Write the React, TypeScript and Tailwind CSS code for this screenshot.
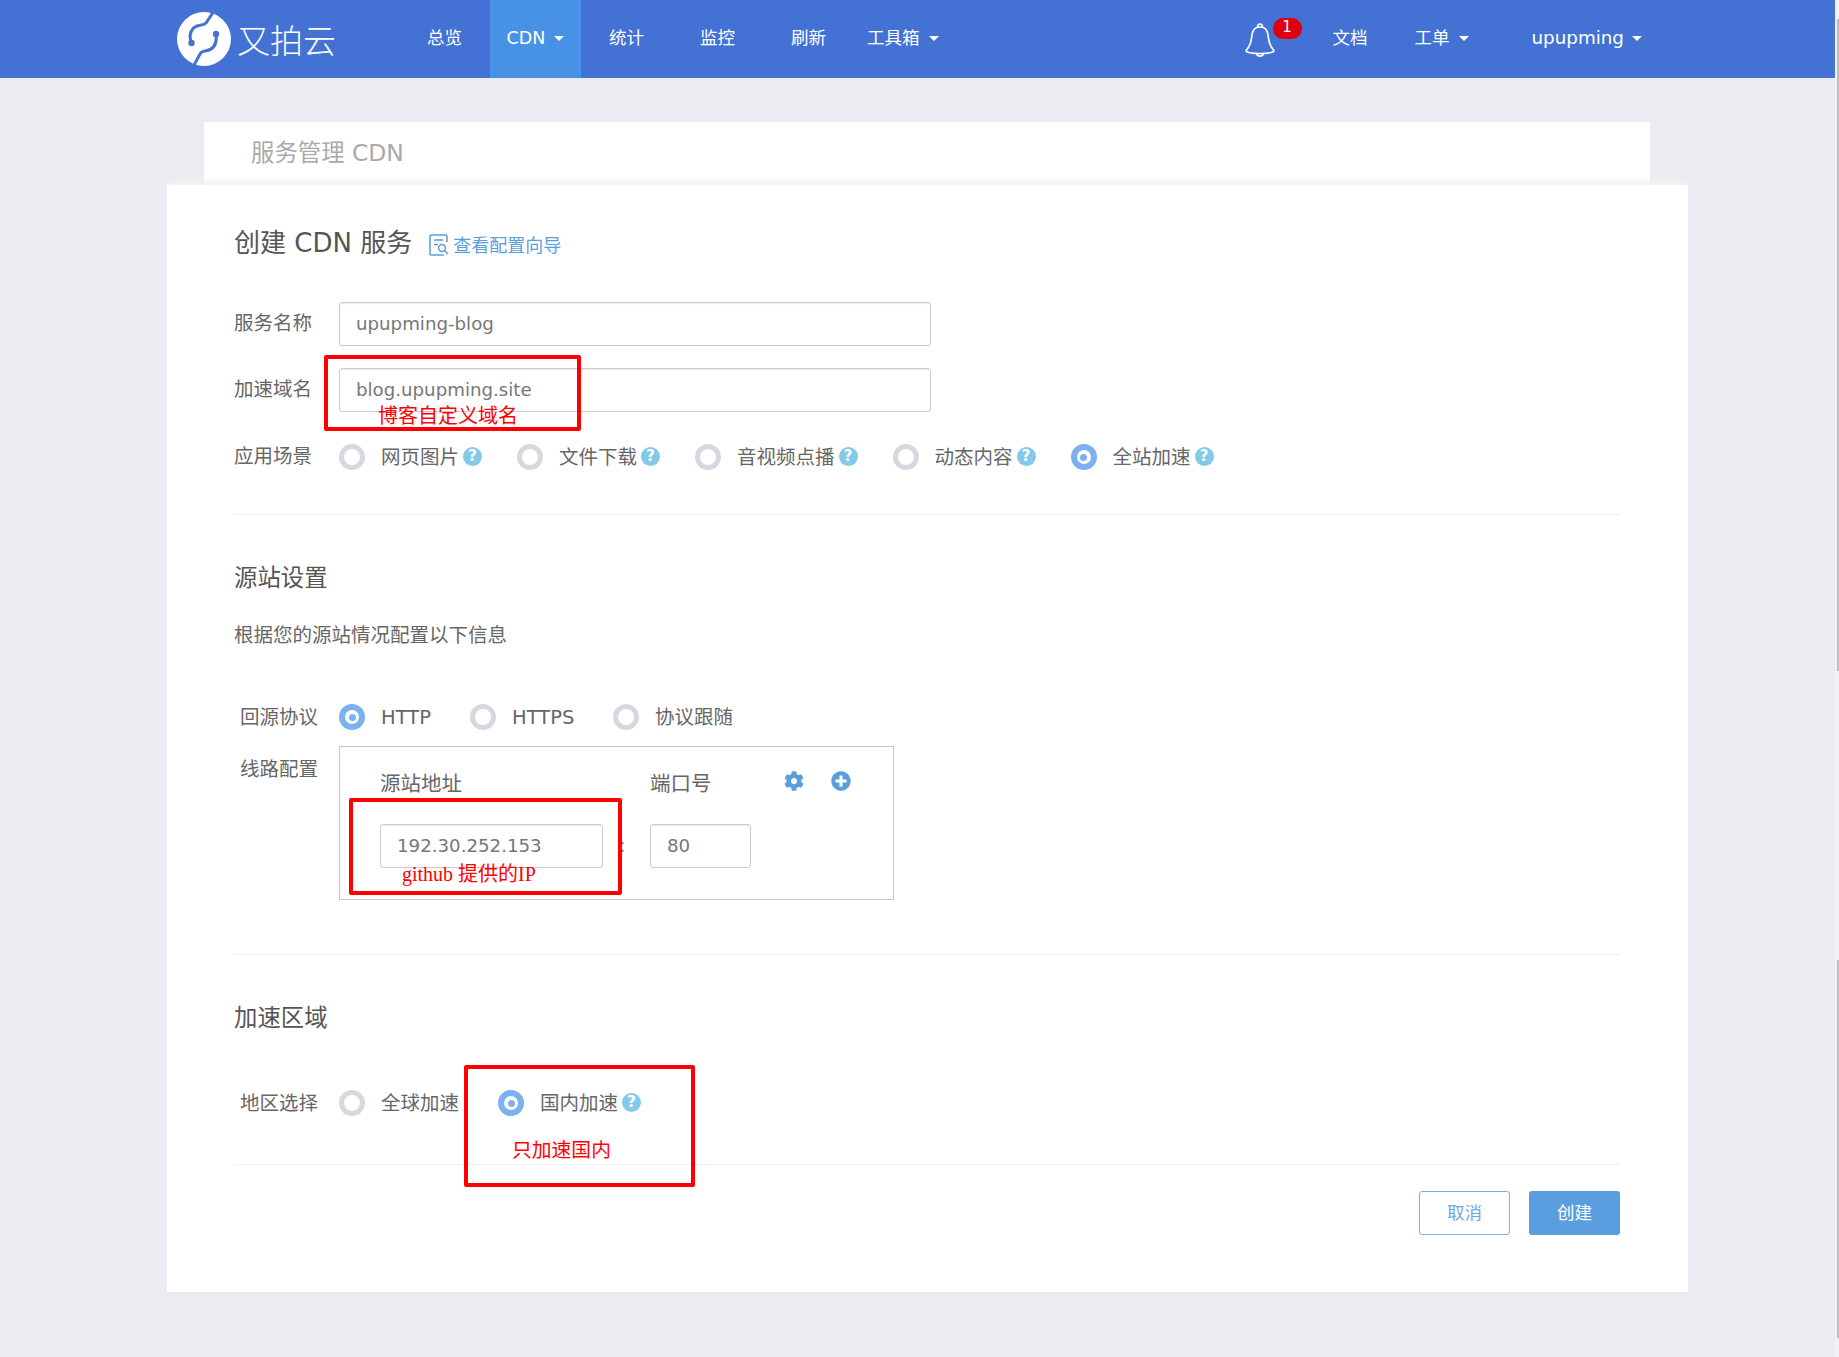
import { FaCog, FaPlusCircle } from "react-icons/fa";

const sans = "font-['DejaVu_Sans','Noto_Sans_CJK_SC',sans-serif]";

function Caret({ className = "" }: { className?: string }) {
  return <span className={`inline-block w-0 h-0 border-x-[5.5px] border-t-[5.5px] border-x-transparent border-t-white mt-[2px] ${className}`} />;
}

function Logo() {
  return (
    <svg width="54" height="54" viewBox="0 0 54 54" className="shrink-0">
      <circle cx="27" cy="27" r="27" fill="#fff" />
      <path d="M37 -1 L29 11 Q27 13 24 13 Q14 14 13 24 L14 31" fill="none" stroke="#4372d4" strokeWidth="3" />
      <path d="M39 22 Q41 37 28 39 Q25 39 23 42 L16 55" fill="none" stroke="#4372d4" strokeWidth="3" />
      <circle cx="14.5" cy="31" r="3.2" fill="#4372d4" />
      <circle cx="39" cy="22" r="3.2" fill="#4372d4" />
    </svg>
  );
}

function Bell() {
  return (
    <svg width="30" height="35" viewBox="0 0 30 35" fill="none" stroke="#fff" strokeWidth="1.7">
      <path d="M15 5 C8 5 7 11 6.5 16 C6 22 4 25 1.5 28 C0.5 29.5 2 30 4 30.5 C11 32 19 32 26 30.5 C28 30 29.5 29.5 28.5 28 C26 25 24 22 23.5 16 C23 11 22 5 15 5 Z" />
      <path d="M12.5 5 C12.5 1 17.5 1 17.5 5" />
      <path d="M11.5 31.5 C12 35 18 35 18.5 31.5" />
    </svg>
  );
}

function GuideIcon() {
  return (
    <svg width="20" height="22" viewBox="0 0 20 22" fill="none" stroke="#5b9ee0" strokeWidth="1.5">
      <path d="M18 8 V2 Q18 1 17 1 H2 Q1 1 1 2 V20 Q1 21 2 21 H15" />
      <path d="M5 6 H14 M5 10.5 H9" />
      <circle cx="13" cy="14" r="3.4" />
      <path d="M15.5 16.5 L19 20" />
    </svg>
  );
}

function Radio({ checked = false }: { checked?: boolean }) {
  return checked ? (
    <span className="w-[26px] h-[26px] shrink-0 rounded-full border-[6px] border-[#7cb1ef] bg-white flex items-center justify-center">
      <span className="w-[7px] h-[7px] rounded-full bg-[#7cb1ef]" />
    </span>
  ) : (
    <span className="w-[26px] h-[26px] shrink-0 rounded-full border-[5px] border-[#d5d8de] bg-white" />
  );
}

function Help() {
  return (
    <span className="ml-1 -mt-[1px] w-[19px] h-[19px] shrink-0 rounded-full bg-[#85c9ea] flex items-center justify-center text-white text-[15.5px] leading-none font-bold">?</span>
  );
}

function Option({ label, checked, help, className = "" }: { label: string; checked?: boolean; help?: boolean; className?: string }) {
  return (
    <div className={`flex items-center ${className}`}>
      <Radio checked={checked} />
      <span className="ml-4 pt-[2px] whitespace-nowrap">{label}</span>
      {help && <Help />}
    </div>
  );
}

function TextInput({ value, className }: { value: string; className: string }) {
  return (
    <input
      readOnly
      value={value}
      className={`h-[44px] rounded-[3px] border border-[#ccc] px-4 pb-[2px] text-[18.2px] text-[#777] bg-white outline-none shadow-[inset_0_1px_1px_rgba(0,0,0,0.08)] ${className}`}
    />
  );
}

const navItems = ["总览", "CDN", "统计", "监控", "刷新"];

export default function App() {
  return (
    <div className={`flex h-screen overflow-hidden bg-[#f1f1f1] ${sans}`}>
      <div className="flex-1 min-w-0 bg-[#ebebf1]">
        {/* Header */}
        <header className="h-[78px] bg-[#4372d4] flex items-stretch text-white text-[17.5px] leading-[26px]">
          <div className="ml-[177px] w-[222px] flex items-center">
            <Logo />
            <span className="ml-[6px] text-[33px] font-light leading-none mt-1">又拍云</span>
          </div>
          {navItems.map((item) => (
            <div
              key={item}
              className={`w-[91px] pb-[3px] flex items-center justify-center ${item === "CDN" ? "bg-[#4892e6]" : ""}`}
            >
              {item}
              {item === "CDN" && <Caret className="ml-[9px]" />}
            </div>
          ))}
          <div className="ml-[13px] pb-[3px] flex items-center">
            工具箱
            <Caret className="ml-[9px]" />
          </div>
          <div className="ml-[306px] relative w-[88px] flex items-center">
            <Bell />
            <span className="absolute left-[28px] top-[18px] w-[29px] h-[21px] rounded-[10px] bg-[#e0000f] text-[15px] leading-[19px] text-center">1</span>
          </div>
          <div className="pb-[3px] flex items-center">文档</div>
          <div className="ml-[47px] pb-[3px] flex items-center">
            工单
            <Caret className="ml-[9px]" />
          </div>
          <div className="ml-[63px] pb-[3px] flex items-center text-[18.3px]">
            upupming
            <Caret className="ml-[8px]" />
          </div>
        </header>

        <main className="ml-[167px] w-[1521px] pt-[44px]">
          {/* Breadcrumb */}
          <div className="ml-[37px] mr-[38px] h-[63px] bg-white pl-[47px] pt-[15px] text-[23.4px] leading-[32px] text-[#aaa]">服务管理 CDN</div>

          {/* Card */}
          <div className="relative bg-white pl-[67px] pr-[68px] pt-[37px] pb-[57px] text-[19.5px] text-[#666] shadow-[0_-6px_6px_-1px_rgba(243,243,243,0.9)]">
            <div className="h-[40px] flex items-center">
              <h1 className="text-[26px] pt-[2px] text-[#555]">创建 CDN 服务</h1>
              <span className="ml-[17px] mt-[6px] flex items-center text-[18px] text-[#5b9ee0]">
                <GuideIcon />
                <span className="ml-[4px]">查看配置向导</span>
              </span>
            </div>

            <div className="mt-[40px] flex items-center">
              <span className="w-[105px]">服务名称</span>
              <TextInput value="upupming-blog" className="w-[592px]" />
            </div>
            <div className="mt-[22px] flex items-center">
              <span className="w-[105px]">加速域名</span>
              <TextInput value="blog.upupming.site" className="w-[592px]" />
            </div>
            <div className="mt-[32px] flex items-center h-[26px]">
              <span className="w-[105px]">应用场景</span>
              <div className="flex items-center gap-[35px]">
                <Option label="网页图片" help />
                <Option label="文件下载" help />
                <Option label="音视频点播" help />
                <Option label="动态内容" help />
                <Option label="全站加速" help checked />
              </div>
            </div>

            <div className="mt-[44px] h-px bg-[#eee]" />

            <h2 className="mt-[48px] h-[30px] leading-[30px] text-[23.4px] text-[#555]">源站设置</h2>
            <p className="mt-[29px] h-[28px] leading-[28px]">根据您的源站情况配置以下信息</p>

            <div className="mt-[54px] flex items-center h-[26px]">
              <span className="w-[105px] pl-[6px] pt-[2px]">回源协议</span>
              <Option label="HTTP" checked className="w-[131px]" />
              <Option label="HTTPS" className="w-[143px]" />
              <Option label="协议跟随" />
            </div>

            <div className="mt-[16px] flex items-start">
              <span className="w-[105px] pl-[6px] mt-[10px] leading-[28px]">线路配置</span>
              <div className="w-[555px] h-[154px] border border-[#c8c8c8] pl-[40px] pt-[23px]">
                <div className="flex items-center h-[28px] text-[20.5px]">
                  <span className="w-[270px]">源站地址</span>
                  <span className="w-[134px]">端口号</span>
                  <FaCog className="text-[#5b9ee0] text-[20px] -mt-[6px]" />
                  <FaPlusCircle className="ml-[27px] text-[#5b9ee0] text-[20px] -mt-[6px]" />
                </div>
                <div className="mt-[26px] flex items-center">
                  <TextInput value="192.30.252.153" className="w-[223px]" />
                  <span className="w-[47px] pl-[16px] text-left text-[#777]">:</span>
                  <TextInput value="80" className="w-[101px]" />
                </div>
              </div>
            </div>

            <div className="mt-[54px] h-px bg-[#eee]" />

            <h2 className="mt-[48px] h-[30px] leading-[30px] text-[23.4px] text-[#555]">加速区域</h2>

            <div className="mt-[57px] flex items-center h-[26px]">
              <span className="w-[105px] pl-[6px] pt-[2px]">地区选择</span>
              <Option label="全球加速" className="w-[159px]" />
              <Option label="国内加速" checked help />
            </div>

            <div className="mt-[48px] h-px bg-[#eee]" />

            <div className="mt-[26px] flex justify-end gap-[19px] text-[17.5px]">
              <button className="w-[91px] h-[44px] rounded-[3px] border border-[#7cb1e6] bg-white text-[#6fa6e2]">取消</button>
              <button className="w-[91px] h-[44px] rounded-[3px] bg-[#5b9ee0] text-white">创建</button>
            </div>

            {/* Red annotations drawn over the form */}
            <div className="absolute left-[157px] top-[170px] w-[257px] h-[76px] border-4 border-[#f00] rounded-[2px] text-[#f00]">
              <span className="absolute left-[50px] top-[42px] text-[20px] leading-[28px] whitespace-nowrap font-['Noto_Sans_CJK_SC',sans-serif]">博客自定义域名</span>
            </div>
            <div className="absolute left-[182px] top-[613px] w-[273px] h-[97px] border-4 border-[#f00] rounded-[2px] text-[#f00]">
              <span className="absolute left-[49px] top-[58px] text-[20px] leading-[28px] whitespace-nowrap font-['Liberation_Serif','Noto_Sans_CJK_SC',serif]">github 提供的IP</span>
            </div>
            <div className="absolute left-[297px] top-[880px] w-[231px] h-[122px] border-4 border-[#f00] rounded-[2px] text-[#f00]">
              <span className="absolute left-[44px] top-[66px] text-[19.8px] leading-[28px] whitespace-nowrap font-['Noto_Sans_CJK_SC',sans-serif]">只加速国内</span>
            </div>
          </div>
        </main>
      </div>

      {/* Scrollbar */}
      <div className="w-[4px] shrink-0 flex flex-col items-end">
        <div className="mt-[19px] w-[2px] h-[652px] bg-[#bdbdbd]" />
        <div className="mt-[289px] w-[2px] h-[378px] bg-[#bdbdbd]" />
      </div>
    </div>
  );
}
